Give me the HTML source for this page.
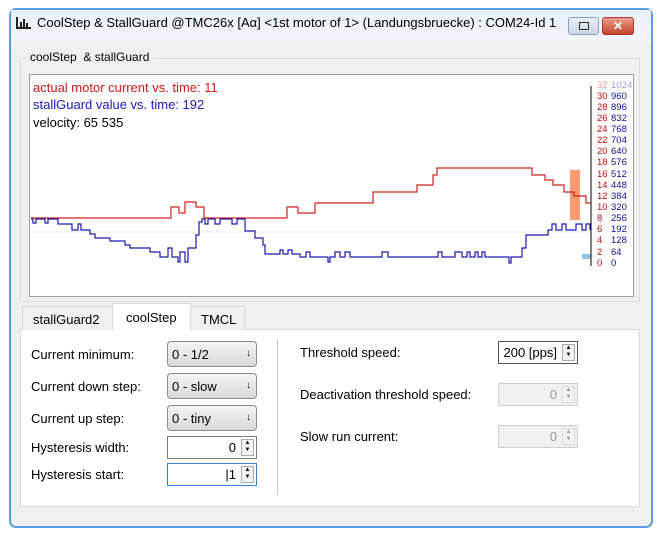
<!DOCTYPE html>
<html><head><meta charset="utf-8"><style>
*{box-sizing:border-box;margin:0;padding:0}
body{width:657px;height:536px;background:#fff;font-family:"Liberation Sans",sans-serif;font-size:13px;color:#000;position:relative;overflow:hidden}
.abs{position:absolute}
.win{left:9px;top:8px;width:644px;height:520px;border:2px solid #5a9ee0;border-radius:7px;background:#f0f0f0}
.title{left:11px;top:10px;width:640px;height:32px;background:linear-gradient(#e9f1fa,#f3f6fa)}
.lbl{font-size:13px;white-space:nowrap}
.combo{width:90px;height:26px;border:1px solid #8a8a8a;border-radius:4px;background:linear-gradient(#f4f4f4,#d8d8d8);padding:5px 4px;font-size:13px}
.combo:after{content:"↓";position:absolute;right:5px;top:6px;font-size:10px}
.spin{height:23px;border:1px solid #7a7a7a;background:#fff;text-align:right;padding:3px 20px 0 0;font-size:13px}
.spin.dis{border-color:#cfcfcf;background:#f0f0f0;color:#999}
.arr{position:absolute;right:2px;top:2px;width:13px;height:17px;border:1px solid #aaa;background:#f2f2f2;font-size:6px;line-height:7px;text-align:center}
.ax span{position:absolute;font-size:9.5px}
</style></head><body>
<div class="abs win"></div>
<div class="abs title"></div>
<svg class="abs" style="left:16px;top:17px" width="15" height="12"><rect x="0" y="0" width="2" height="12" fill="#222"/><rect x="4" y="5" width="2" height="7" fill="#222"/><rect x="7" y="2" width="2" height="10" fill="#222"/><rect x="10" y="6" width="2" height="6" fill="#222"/><rect x="0" y="10" width="15" height="2" fill="#222"/></svg>
<div class="abs lbl" style="left:37px;top:15px;font-size:13px">CoolStep &amp; StallGuard @TMC26x [Aα] &lt;1st motor of 1&gt; (Landungsbruecke) : COM24-Id 1</div>
<div class="abs" style="left:568px;top:17px;width:31px;height:18px;border:1px solid #8aa3c0;border-radius:3px;background:linear-gradient(#e8eef6,#c9d6e6)"><div style="margin:4px auto;width:10px;height:8px;border:1px solid #333"></div></div>
<div class="abs" style="left:602px;top:17px;width:32px;height:18px;border:1px solid #a33;border-radius:3px;background:linear-gradient(#e8a08e,#c8432a);color:#fff;text-align:center;font-weight:bold;font-size:12px;line-height:16px">✕</div>

<div class="abs" style="left:20px;top:58px;width:620px;height:244px;border:1px solid #dcdcdc"></div>
<div class="abs lbl" style="left:26px;top:50px;background:#f0f0f0;padding:0 4px;font-size:12px">coolStep &nbsp;&amp; stallGuard</div>

<div class="abs" style="left:29px;top:74px;width:605px;height:223px;border:1px solid #a0a0a0;background:#fff"></div>
<svg class="abs" style="left:0;top:0" width="657" height="536">
<line x1="31" y1="232" x2="590" y2="232" stroke="#e6e8f0"/>
<rect x="570" y="170" width="10" height="50" fill="#ff9a70"/>
<rect x="582" y="254" width="9" height="5" fill="#90c4e0"/>
<polyline fill="none" stroke="#d02020" stroke-width="1.2" points="31,218 171,218 171,207 179,207 179,213 185,213 185,202 196,202 196,207 204,207 204,218 287,218 287,207 298,207 298,213 315,213 315,203 373,203 373,192 379,192 379,192 417,192 417,185 433,185 433,175 437,175 437,168 532,168 532,175 545,175 545,180 553,180 553,185 564,185 564,192 574,192 574,196 586,196 586,203 591,203"/>
<polyline fill="none" stroke="#1a1ab0" stroke-width="1.2" points="31,219 33,219 33,223 36,223 36,219 45,219 45,223 48,223 48,219 58,219 58,224 72,224 72,230 78,230 78,224 81,224 81,230 90,230 90,234 95,234 95,238 110,238 110,241 125,241 125,245 130,245 130,248 150,248 150,252 160,252 160,257 168,257 168,248 172,248 172,257 178,257 178,262 180,262 180,252 185,252 185,262 188,262 188,248 196,248 196,235 199,235 199,222 202,222 202,219 205,219 205,224 208,224 208,219 215,219 215,224 220,224 220,219 232,219 232,224 237,224 237,219 245,219 245,231 255,231 255,238 263,238 263,245 265,245 265,254 280,254 280,250 283,250 283,254 288,254 288,250 292,250 292,254 300,254 300,257 306,257 306,252 310,252 310,257 328,257 328,262 330,262 330,257 335,257 335,252 340,252 340,257 345,257 345,252 350,252 350,257 382,257 382,252 388,252 388,257 438,257 438,252 442,252 442,257 455,257 455,252 462,252 462,257 467,257 467,252 470,252 470,257 475,257 475,252 478,252 478,257 482,257 482,252 485,252 485,257 509,257 509,263 511,263 511,257 522,257 522,248 526,248 526,235 548,235 548,230 552,230 552,224 556,224 556,230 562,230 562,224 566,224 566,230 576,230 576,224 582,224 582,230 586,230 586,224 590,224 590,230"/>
<line x1="591" y1="86" x2="591" y2="266" stroke="#000"/>
</svg>
<div class="abs lbl" style="left:33px;top:80px;color:#d01818">actual motor current vs. time: 11</div>
<div class="abs lbl" style="left:33px;top:97px;color:#1a1ac0">stallGuard value vs. time: 192</div>
<div class="abs lbl" style="left:33px;top:115px">velocity: 65 535</div>
<div class="abs ax" style="left:0;top:0">
<span style="left:597px;top:80px;color:#f0a0a0">32</span><span style="left:611px;top:80px;color:#a0a0e0">1024</span>
<span style="left:597px;top:91px;color:#c01010">30</span><span style="left:611px;top:91px;color:#1010a0">960</span>
<span style="left:597px;top:102px;color:#c01010">28</span><span style="left:611px;top:102px;color:#1010a0">896</span>
<span style="left:597px;top:113px;color:#c01010">26</span><span style="left:611px;top:113px;color:#1010a0">832</span>
<span style="left:597px;top:124px;color:#c01010">24</span><span style="left:611px;top:124px;color:#1010a0">768</span>
<span style="left:597px;top:135px;color:#c01010">22</span><span style="left:611px;top:135px;color:#1010a0">704</span>
<span style="left:597px;top:146px;color:#c01010">20</span><span style="left:611px;top:146px;color:#1010a0">640</span>
<span style="left:597px;top:157px;color:#c01010">18</span><span style="left:611px;top:157px;color:#1010a0">576</span>
<span style="left:597px;top:169px;color:#c01010">16</span><span style="left:611px;top:169px;color:#1010a0">512</span>
<span style="left:597px;top:180px;color:#c01010">14</span><span style="left:611px;top:180px;color:#1010a0">448</span>
<span style="left:597px;top:191px;color:#c01010">12</span><span style="left:611px;top:191px;color:#1010a0">384</span>
<span style="left:597px;top:202px;color:#c01010">10</span><span style="left:611px;top:202px;color:#1010a0">320</span>
<span style="left:597px;top:213px;color:#c01010">8</span><span style="left:611px;top:213px;color:#1010a0">256</span>
<span style="left:597px;top:224px;color:#c01010">6</span><span style="left:611px;top:224px;color:#1010a0">192</span>
<span style="left:597px;top:235px;color:#c01010">4</span><span style="left:611px;top:235px;color:#1010a0">128</span>
<span style="left:597px;top:247px;color:#c01010">2</span><span style="left:611px;top:247px;color:#1010a0">64</span>
<span style="left:597px;top:258px;color:#c01010">0</span><span style="left:611px;top:258px;color:#1010a0">0</span>
</div>

<div class="abs" style="left:20px;top:329px;width:620px;height:178px;border:1px solid #d8d8d8;background:#fff"></div>
<div class="abs" style="left:22px;top:306px;width:91px;height:24px;border:1px solid #d8d8d8;border-bottom:none;background:#f0f0f0;padding:5px 0 0 10px">stallGuard2</div>
<div class="abs" style="left:112px;top:303px;width:79px;height:27px;border:1px solid #d8d8d8;border-bottom:none;background:#fff;padding:6px 0 0 13px">coolStep</div>
<div class="abs" style="left:190px;top:306px;width:55px;height:24px;border:1px solid #d8d8d8;border-bottom:none;background:#f0f0f0;padding:5px 0 0 10px">TMCL</div>

<div class="abs lbl" style="left:31px;top:347px">Current minimum:</div>
<div class="abs lbl" style="left:31px;top:379px">Current down step:</div>
<div class="abs lbl" style="left:31px;top:411px">Current up step:</div>
<div class="abs lbl" style="left:31px;top:440px">Hysteresis width:</div>
<div class="abs lbl" style="left:31px;top:467px">Hysteresis start:</div>
<div class="abs combo" style="left:167px;top:341px">0 - 1/2</div>
<div class="abs combo" style="left:167px;top:373px">0 - slow</div>
<div class="abs combo" style="left:167px;top:405px">0 - tiny</div>
<div class="abs spin" style="left:167px;top:436px;width:90px">0<div class="arr">▲<br>▼</div></div>
<div class="abs spin" style="left:167px;top:463px;width:90px;border-color:#3a7fd0">|1<div class="arr">▲<br>▼</div></div>
<div class="abs" style="left:277px;top:340px;width:1px;height:155px;background:#c8c8c8"></div>

<div class="abs lbl" style="left:300px;top:345px">Threshold speed:</div>
<div class="abs lbl" style="left:300px;top:387px">Deactivation threshold speed:</div>
<div class="abs lbl" style="left:300px;top:429px">Slow run current:</div>
<div class="abs spin" style="left:498px;top:341px;width:80px;border-color:#555">200 [pps]<div class="arr">▲<br>▼</div></div>
<div class="abs spin dis" style="left:498px;top:383px;width:80px">0<div class="arr" style="border-color:#ddd;color:#999">▲<br>▼</div></div>
<div class="abs spin dis" style="left:498px;top:425px;width:80px">0<div class="arr" style="border-color:#ddd;color:#999">▲<br>▼</div></div>
</body></html>
